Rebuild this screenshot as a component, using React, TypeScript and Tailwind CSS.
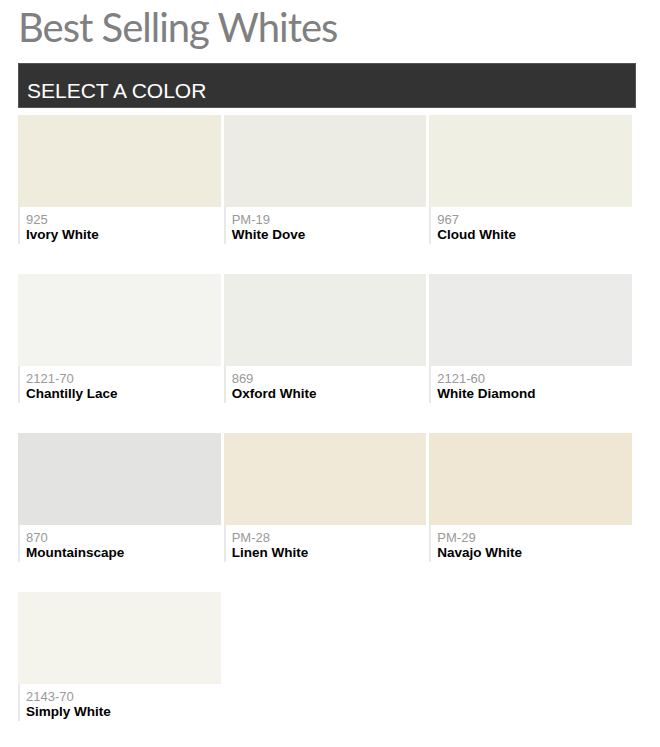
import React from 'react';

interface Paint {
  code: string;
  name: string;
  hex: string;
}

const paints: Paint[] = [
  { code: '925', name: 'Ivory White', hex: '#f0ecdd' },
  { code: 'PM-19', name: 'White Dove', hex: '#ecebe4' },
  { code: '967', name: 'Cloud White', hex: '#f0efe4' },
  { code: '2121-70', name: 'Chantilly Lace', hex: '#f3f4f0' },
  { code: '869', name: 'Oxford White', hex: '#eeeee8' },
  { code: '2121-60', name: 'White Diamond', hex: '#ebecea' },
  { code: '870', name: 'Mountainscape', hex: '#e3e4e1' },
  { code: 'PM-28', name: 'Linen White', hex: '#f1e9d8' },
  { code: 'PM-29', name: 'Navajo White', hex: '#efe6d4' },
  { code: '2143-70', name: 'Simply White', hex: '#f4f4ec' },
];

function Swatch({ paint }: { paint: Paint }) {
  return (
    <div className="flex flex-col">
      <div className="h-[92px]" style={{ backgroundColor: paint.hex }} />
      <div className="h-[37px] border-l-2 border-[#e8e8e8] pl-[6px] pt-[6px] font-['Liberation_Sans',Arial,sans-serif]">
        <div className="text-[13px] leading-[14px] text-[#999]">{paint.code}</div>
        <div className="text-[13.5px] leading-[16px] font-bold text-black">{paint.name}</div>
      </div>
    </div>
  );
}

export default function App() {
  return (
    <div className="w-[660px] min-h-[747px] bg-white pl-[18px]">
      <h1 className="pt-[3px] h-[63px] text-[40px] leading-[48px] text-[#808080] font-['Lato','Noto_Sans',sans-serif] tracking-[-1px]">
        Best Selling Whites
      </h1>
      <div className="w-[618px] h-[45px] bg-[#333333] border border-[#555] flex items-end pl-[8px] pb-[4px]">
        <span className="text-white text-[21px] leading-[24px] font-['Liberation_Sans',Arial,sans-serif]">
          SELECT A COLOR
        </span>
      </div>
      <div className="mt-[7px] w-[614px] grid grid-cols-3 gap-x-[3px] gap-y-[30px]">
        {paints.map((p) => (
          <Swatch key={p.code} paint={p} />
        ))}
      </div>
    </div>
  );
}
